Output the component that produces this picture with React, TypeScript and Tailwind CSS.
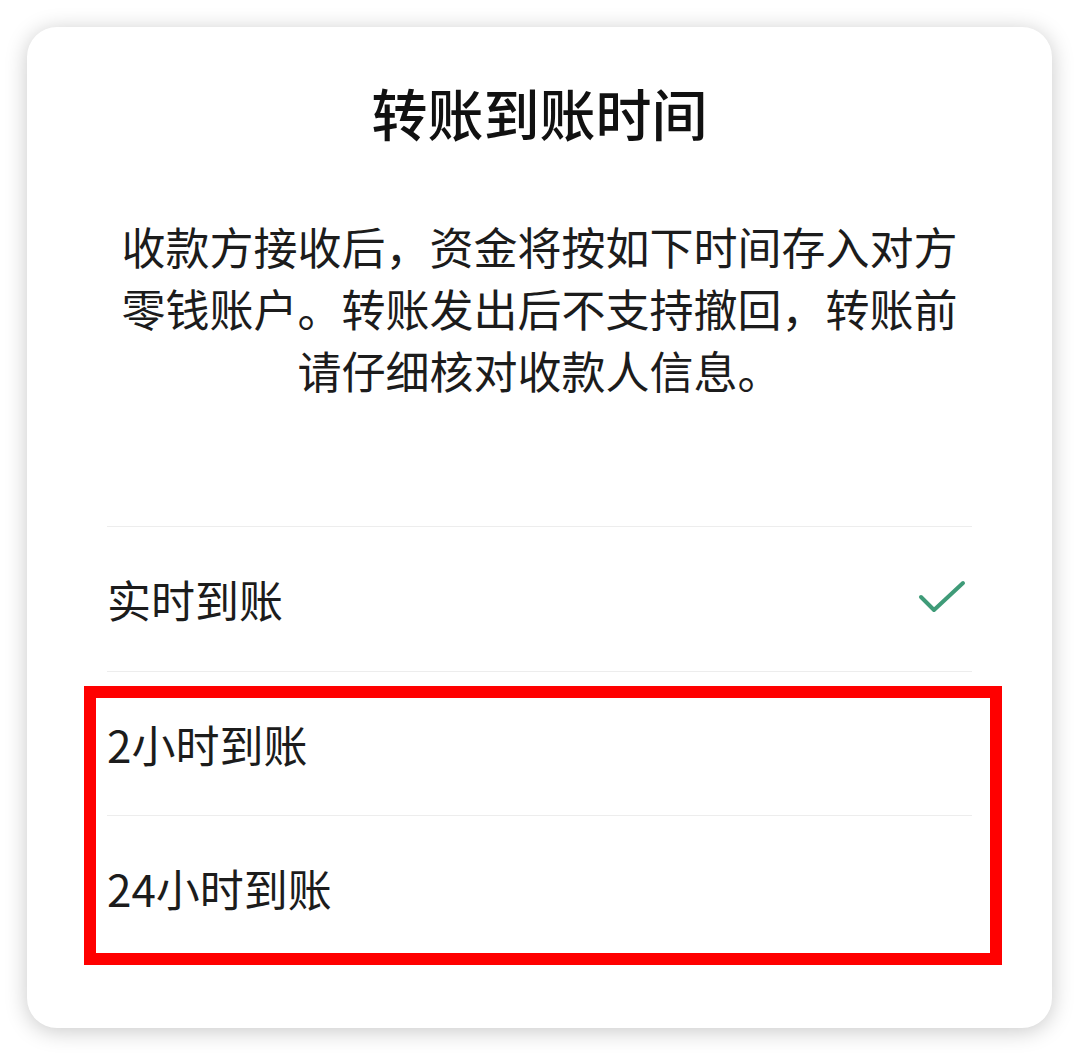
import React from "react";

export default function App() {
  const font = { fontFamily: '"Noto Sans CJK SC", "Noto Sans", sans-serif' };
  return (
    <div className="w-[1080px] h-[1056px] bg-white pt-[27px] pl-[27px] pr-[28px]" style={font}>
      <div className="relative w-[1025px] h-[1001px] bg-white rounded-[30px] shadow-[0_3px_22px_rgba(0,0,0,0.22)] flex flex-col px-[80px] pt-[57px]">
        <h1 className="text-center text-[56px] leading-[56px] font-medium text-[#111111]">转账到账时间</h1>
        <p className="mt-[75px] text-center text-[44px] leading-[62px] text-[#1c1c1c]">
          收款方接收后，资金将按如下时间存入对方
          <br />
          零钱账户。转账发出后不支持撤回，转账前
          <br />
          请仔细核对收款人信息。
        </p>
        <div className="mt-[125px] flex flex-col">
          <div className="h-[145px] border-t border-[#ededed] flex items-center justify-between">
            <span className="text-[44px] leading-none text-[#1c1c1c]">实时到账</span>
            <svg width="52" height="40" viewBox="0 0 52 40" className="mr-[4px]">
              <polyline points="5,18 18,31 47,4" fill="none" stroke="#3f9b78" strokeWidth="4" strokeLinecap="round" strokeLinejoin="round" />
            </svg>
          </div>
          <div className="h-[144px] border-t border-[#ededed] flex items-center">
            <span className="text-[44px] leading-none text-[#1c1c1c]">2小时到账</span>
          </div>
          <div className="h-[144px] border-t border-[#ededed] flex items-center">
            <span className="text-[44px] leading-none text-[#1c1c1c]">24小时到账</span>
          </div>
        </div>
        <div className="absolute left-[57px] top-[659px] w-[918px] h-[279px] border-[12px] border-[#ff0000]"></div>
      </div>
    </div>
  );
}
